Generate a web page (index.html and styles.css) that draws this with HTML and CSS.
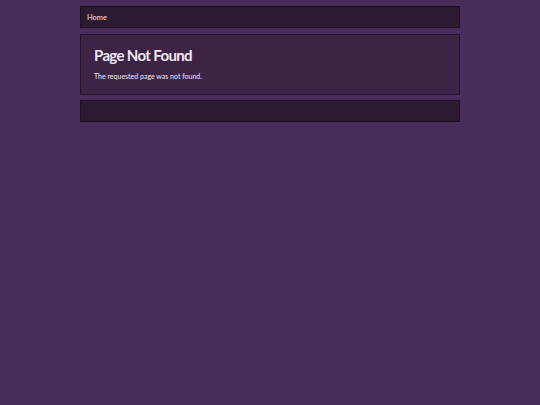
FILE: index.html
```html
<!DOCTYPE html>
<html>
<head>
<meta charset="utf-8">
<link rel="stylesheet" href="styles.css">
</head>
<body>
<div class="wrap">
  <nav class="nav"><a class="nav-link" href="#">Home</a></nav>
  <main class="content">
    <h1 class="title">Page Not Found</h1>
    <p class="msg">The requested page was not found.</p>
  </main>
  <footer class="footer"></footer>
</div>
</body>
</html>
```
FILE: styles.css
```css
html, body {
  margin: 0;
  padding: 0;
  background: #482c5b;
  font-family: Lato, "DejaVu Sans", sans-serif;
  color: #f0e8f2;
}
.wrap {
  width: 380px;
  margin: 0 auto;
  padding-top: 6px;
  display: flex;
  flex-direction: column;
}
.nav {
  box-sizing: border-box;
  height: 22px;
  background: #2b1a31;
  border: 1px solid #1f1024;
  display: flex;
  align-items: center;
  padding-left: 6px;
}
.nav-link {
  color: #f0e8f2;
  text-decoration: none;
  font-size: 7.5px;
  line-height: 9px;
}
.content {
  box-sizing: border-box;
  margin-top: 6px;
  height: 61px;
  background: #3d2447;
  border: 1px solid #251429;
  padding: 11px 12px 0 13px;
}
.title {
  margin: 0;
  font-size: 15px;
  font-weight: bold;
  line-height: 18px;
  letter-spacing: -0.65px;
}
.msg {
  margin: 8px 0 0;
  font-size: 7px;
  line-height: 9px;
}
.footer {
  box-sizing: border-box;
  margin-top: 5px;
  height: 22px;
  background: #2b1a31;
  border: 1px solid #1f1024;
}
```
